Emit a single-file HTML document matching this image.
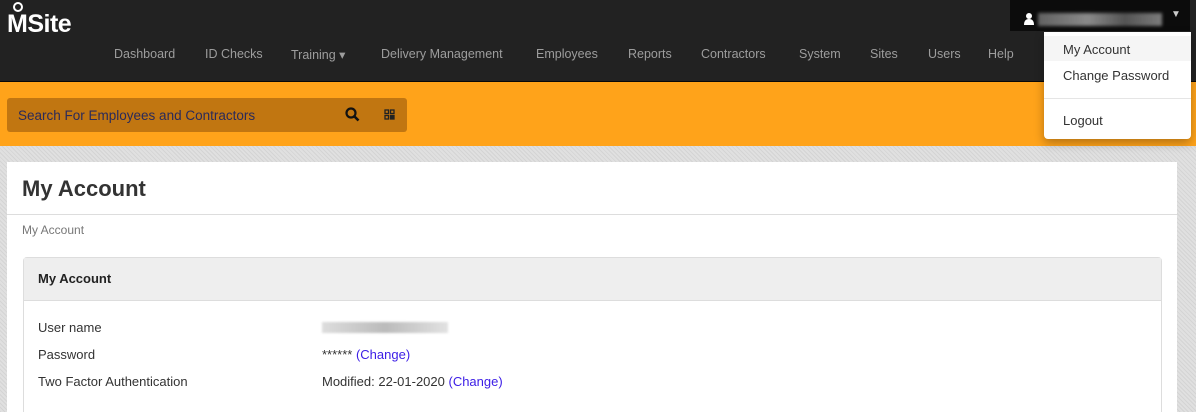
<!DOCTYPE html>
<html><head><style>
*{margin:0;padding:0;box-sizing:border-box}
html,body{width:1196px;height:412px;overflow:hidden}
body{font-family:"Liberation Sans",sans-serif;font-size:13px;background:#d9d9d9;background-image:repeating-linear-gradient(45deg,#d4d4d4 0 1px,#e0e0e0 1px 3px);position:relative}
.nav{position:absolute;left:0;top:0;width:1196px;height:82px;background:#222;border-bottom:1px solid #080808}
.logo{position:absolute;left:7px;top:10px;color:#fff;font-weight:bold;font-size:25px;letter-spacing:-0.5px;line-height:28px}
.logo .o{position:absolute;left:6px;top:-8px;width:10px;height:10px;border:2.5px solid #fff;border-radius:50%}
.menu a{position:absolute;top:47px;color:#9d9d9d;font-size:12.5px;text-decoration:none;white-space:nowrap}
.user{position:absolute;left:1010px;top:0;width:180px;height:31px;background:#0c0c0c}
.blur{position:absolute;left:1038px;top:13px;width:124px;height:13px;background:linear-gradient(90deg,#777,#aaa 40%,#666 70%,#999);filter:blur(1.5px);opacity:.8}
.dd{position:absolute;left:1044px;top:32px;width:147px;height:107px;background:#fff;border-radius:0 0 4px 4px;box-shadow:0 4px 10px rgba(0,0,0,.3)}
.dd div{position:absolute;left:19px;color:#333;font-size:13px}
.orange{position:absolute;left:0;top:82px;width:1196px;height:64px;background:#ffa31a}
.search{position:absolute;left:7px;top:98px;width:400px;height:34px;background:#c17611;border-radius:3px}
.search span{position:absolute;left:11px;top:10px;color:#2a2a5a;font-size:13.5px}
.panel{position:absolute;left:7px;top:162px;width:1170px;height:250px;background:#fff}
.inner{position:absolute;left:16px;top:95px;width:1139px;height:155px;border:1px solid #ddd;border-bottom:none;border-radius:4px 4px 0 0;background:#fff}
.ih{height:43px;background:#eeeeee;border-bottom:1px solid #ddd;padding:13px 14px;font-weight:bold;color:#222;font-size:13px}
.row{position:absolute;left:14px;color:#333;font-size:13px}
.val{position:absolute;left:298px;color:#333;font-size:13px}
.lk{color:#3b1ce6}
</style></head><body>
<div class="nav">
 <div class="logo"><span class="o"></span>MSite</div>
 <div class="menu">
  <a style="left:114px">Dashboard</a><a style="left:205px">ID Checks</a><a style="left:291px">Training ▾</a>
  <a style="left:381px">Delivery Management</a><a style="left:536px">Employees</a><a style="left:628px">Reports</a>
  <a style="left:701px">Contractors</a><a style="left:799px">System</a><a style="left:870px">Sites</a>
  <a style="left:928px">Users</a><a style="left:988px">Help</a>
 </div>
</div>
<div class="orange"></div>
<div class="user"><svg style="position:absolute;left:14px;top:13px" width="10" height="12" viewBox="0 0 10 12"><circle cx="5" cy="3" r="3" fill="#fff"/><path d="M0 12 Q0 6 5 6 Q10 6 10 12Z" fill="#fff"/></svg><span style="position:absolute;left:161px;top:9px;color:#ccc;font-size:10px">▼</span></div>
<div class="blur"></div>
<div class="dd">
 <div style="left:0;top:4px;width:147px;height:25px;background:#f5f5f5"></div>
 <div style="top:10px">My Account</div>
 <div style="top:36px">Change Password</div>
 <div style="left:0;top:66px;width:147px;height:1px;background:#e5e5e5"></div>
 <div style="top:81px">Logout</div>
</div>
<div class="search"><span>Search For Employees and Contractors</span>
 <svg style="position:absolute;left:338px;top:9px" width="15" height="15" viewBox="0 0 15 15"><circle cx="6" cy="6" r="4.5" stroke="#111" stroke-width="2.2" fill="none"/><path d="M9.5 9.5L13.5 13.5" stroke="#111" stroke-width="2.6"/></svg>
 <svg style="position:absolute;left:377px;top:11px" width="11" height="11" viewBox="0 0 11 11" fill="none" stroke="#222" stroke-width="1.3"><rect x="1" y="1" width="3.5" height="3.5"/><rect x="6.5" y="1" width="3.5" height="3.5"/><rect x="1" y="6.5" width="3.5" height="3.5"/><rect x="6.5" y="6.5" width="3.5" height="3.5" fill="#222"/></svg>
</div>
<div class="panel">
 <div style="position:absolute;left:15px;top:14px;font-size:22px;font-weight:bold;color:#333">My Account</div>
 <div style="position:absolute;left:0;top:52px;width:1170px;height:1px;background:#ddd"></div>
 <div style="position:absolute;left:15px;top:61px;color:#777;font-size:12px">My Account</div>
 <div class="inner">
  <div class="ih">My Account</div>
  <div class="row" style="top:62px">User name</div>
  <div class="row" style="top:89px">Password</div>
  <div class="row" style="top:116px">Two Factor Authentication</div>
  <div style="position:absolute;left:298px;top:64px;width:126px;height:11px;background:linear-gradient(90deg,#ddd,#bbb 50%,#e2e2e2);filter:blur(1px)"></div>
  <div class="val" style="top:89px">****** <span class="lk">(Change)</span></div>
  <div class="val" style="top:116px">Modified: 22-01-2020 <span class="lk">(Change)</span></div>
 </div>
</div>
</body></html>
